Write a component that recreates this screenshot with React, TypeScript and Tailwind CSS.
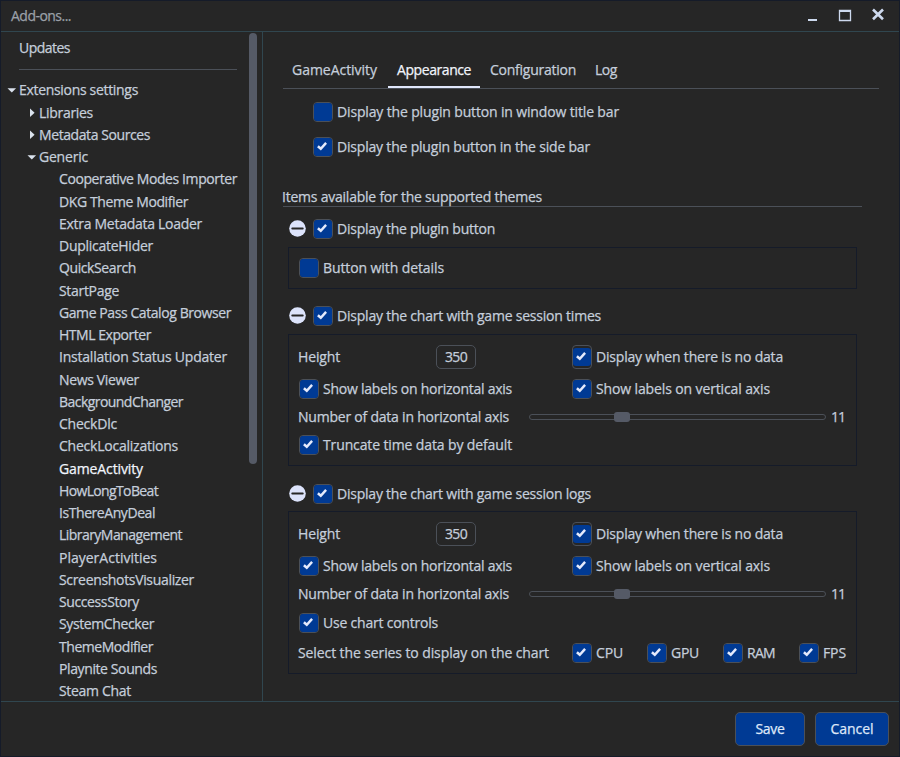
import { useLayoutEffect, useRef, useState, type ReactNode } from "react";

/** Text that spreads its letters so the line fills exactly `w` pixels. */
function Txt({ w, className = "", children }: { w: number; className?: string; children: string }) {
  const ref = useRef<HTMLSpanElement>(null);
  const [spacing, setSpacing] = useState(0);
  useLayoutEffect(() => {
    if (!ref.current) return;
    const natural = ref.current.getBoundingClientRect().width - spacing * children.length;
    setSpacing((w - natural) / children.length);
  }, [w, children]);
  return (
    <span ref={ref} className={`block w-max shrink-0 whitespace-pre leading-5 ${className}`} style={{ letterSpacing: `${spacing}px` }}>
      {children}
    </span>
  );
}

function Box({ on = true, tall = false }: { on?: boolean; tall?: boolean }) {
  return (
    <span className={`flex w-5 shrink-0 items-center justify-center rounded-[4px] border border-[#4b5058] ${tall ? "h-6" : "h-5"}`}>
      <span className="flex h-[18px] w-[18px] items-center justify-center rounded-[3px] bg-[#003a94]">
        {on && (
          <svg width="10" height="9" viewBox="0 0 10 9" className="mr-[2px] mb-px" fill="none" stroke="#e4eafc" strokeWidth="2.5">
            <path d="M0.9 4.2 L3.8 6.8 L9.1 0.9" />
          </svg>
        )}
      </span>
    </span>
  );
}

function Check({ w, on, tall, children }: { w: number; on?: boolean; tall?: boolean; children: string }) {
  return (
    <div className="flex items-center gap-1">
      <Box on={on} tall={tall} />
      <Txt w={w}>{children}</Txt>
    </div>
  );
}

function SectionHead({ w, children }: { w: number; children: string }) {
  return (
    <div className="flex h-5 items-center gap-[7px] pl-[6px]">
      <svg width="17" height="17" viewBox="0 0 17 17" className="mb-px">
        <circle cx="8.5" cy="8.5" r="8.3" fill="#dce3fb" />
        <path d="M3.3 8.5h10.4" stroke="#262626" strokeWidth="2" strokeLinecap="round" />
      </svg>
      <Check w={w}>{children}</Check>
    </div>
  );
}

function Panel({ className, children }: { className: string; children: ReactNode }) {
  return <div className={`ml-[5px] w-[569px] border border-[#151b29] pl-[10px] ${className}`}>{children}</div>;
}

function ChartOptions() {
  return (
    <>
      <div className="flex h-6 items-center">
        <div className="-ml-px w-[138px]">
          <Txt w={42}>Height</Txt>
        </div>
        <div className="flex h-6 w-10 items-center justify-center rounded-[5px] border border-[#4b5058]">
          <Txt w={22}>350</Txt>
        </div>
        <div className="ml-24">
          <Check w={187} tall>Display when there is no data</Check>
        </div>
      </div>
      <div className="mt-[10px] flex h-5">
        <div className="w-[273px]">
          <Check w={189}>Show labels on horizontal axis</Check>
        </div>
        <Check w={174}>Show labels on vertical axis</Check>
      </div>
      <div className="mt-[8px] flex h-5 items-center">
        <div className="-ml-px w-[231px]">
          <Txt w={211}>Number of data in horizontal axis</Txt>
        </div>
        <div className="flex h-[6px] w-[297px] items-center rounded-full border border-[#4b5058] pl-[84px]">
          <div className="h-[10px] w-4 shrink-0 rounded-[3px] bg-[#555a66]" />
        </div>
        <Txt w={14} className="ml-[5px]">11</Txt>
      </div>
    </>
  );
}

const extensions: [string, number][] = [
  ["Cooperative Modes Importer", 178],
  ["DKG Theme Modifier", 129],
  ["Extra Metadata Loader", 143],
  ["DuplicateHider", 94],
  ["QuickSearch", 77],
  ["StartPage", 60],
  ["Game Pass Catalog Browser", 172],
  ["HTML Exporter", 92],
  ["Installation Status Updater", 168],
  ["News Viewer", 80],
  ["BackgroundChanger", 124],
  ["CheckDlc", 58],
  ["CheckLocalizations", 119],
  ["GameActivity", 84],
  ["HowLongToBeat", 99],
  ["IsThereAnyDeal", 96],
  ["LibraryManagement", 123],
  ["PlayerActivities", 98],
  ["ScreenshotsVisualizer", 135],
  ["SuccessStory", 80],
  ["SystemChecker", 95],
  ["ThemeModifier", 94],
  ["Playnite Sounds", 98],
  ["Steam Chat", 72],
];

function Branch({ open, w, children }: { open: boolean; w: number; children: string }) {
  return (
    <div className="flex h-[22.2px] items-center">
      <svg width="12" height="10" viewBox="0 0 12 10" fill="#dbe3ee">
        {open ? <path d="M0.5 3.2h8.6L4.8 7.4z" /> : <path d="M3 0.6v8.4l4.6-4.2z" />}
      </svg>
      <Txt w={w}>{children}</Txt>
    </div>
  );
}

const tabs: [string, number, boolean][] = [
  ["GameActivity", 85, false],
  ["Appearance", 74, true],
  ["Configuration", 86, false],
  ["Log", 22, false],
];

export default function App() {
  return (
    <div className="flex h-[757px] w-[900px] flex-col overflow-hidden border border-[#151b29] bg-[#262626] font-['Open_Sans',sans-serif] text-[14px] text-[#c5cedb] [-webkit-text-stroke:0.25px]">
      <header className="flex h-[31px] shrink-0 items-center justify-between border-b border-[#30464f] pl-[10px] text-[#9ba0a8]">
        <Txt w={60}>Add-ons...</Txt>
        <svg width="100" height="30" viewBox="799 1 100 30" fill="none" stroke="#cdd9ee">
          <path d="M808 20h9" strokeWidth="2" />
          <path d="M839.5 10.5h11v10h-11z" strokeWidth="1.3" />
          <path d="M839 11h12" strokeWidth="2" />
          <path d="M873 9.5l10 9.8M883 9.5l-10 9.8" strokeWidth="2.6" />
        </svg>
      </header>

      <div className="flex min-h-0 flex-1">
        <aside className="flex w-[262px] shrink-0 border-r border-[#30464f]">
          <nav className="w-[236px] shrink-0">
            <div className="ml-[18px] flex h-[38px] items-center border-b border-[#4b5058] pb-[5px]">
              <Txt w={51}>Updates</Txt>
            </div>
            <div className="pt-[9px] pl-[6px]">
              <Branch open w={119}>Extensions settings</Branch>
              <div className="pt-[0.5px] pl-5">
                <Branch open={false} w={54}>Libraries</Branch>
                <Branch open={false} w={111}>Metadata Sources</Branch>
                <Branch open w={49}>Generic</Branch>
                <ul className="pl-8">
                  {extensions.map(([name, w]) => (
                    <li key={name} className={`flex h-[22.25px] items-center ${name === "GameActivity" ? "text-[#f1f5fc]" : ""}`}>
                      <Txt w={w}>{name}</Txt>
                    </li>
                  ))}
                </ul>
              </div>
            </div>
          </nav>
          <div className="mt-px ml-3 h-[431px] w-2 rounded-full bg-[#555a66]" />
        </aside>

        <main className="flex-1 pl-5">
          <div className="flex h-[57px] w-[596px] items-end gap-[2px] border-b border-[#4b5058] pl-px">
            {tabs.map(([name, w, active]) => (
              <div
                key={name}
                className={`flex h-7 items-start border-b-2 ${active ? "border-[#e0e7fb] px-[9px] text-[#f1f5fc]" : "border-transparent pr-[9px] pl-2"}`}
              >
                <Txt w={w}>{name}</Txt>
              </div>
            ))}
          </div>
          <div className="mt-[13px] flex flex-col gap-[15px] pl-[30px]">
            <Check w={282} on={false}>Display the plugin button in window title bar</Check>
            <Check w={253}>Display the plugin button in the side bar</Check>
          </div>
          <div className="mt-[30px] mb-3 flex h-5 w-[579px] items-center border-b border-[#4b5058]">
            <Txt w={260} className="-ml-px">Items available for the supported themes</Txt>
          </div>

          <SectionHead w={158}>Display the plugin button</SectionHead>
          <Panel className="mt-2 h-[42px] pt-[10px]">
            <Check w={121} on={false}>Button with details</Check>
          </Panel>

          <div className="mt-[17px]">
            <SectionHead w={264}>Display the chart with game session times</SectionHead>
          </div>
          <Panel className="mt-2 h-[132px] pt-[10px]">
            <ChartOptions />
            <div className="mt-2">
              <Check w={189}>Truncate time data by default</Check>
            </div>
          </Panel>

          <div className="mt-[18px]">
            <SectionHead w={254}>Display the chart with game session logs</SectionHead>
          </div>
          <Panel className="mt-[7px] h-[163px] pt-[10px]">
            <ChartOptions />
            <div className="mt-[9px]">
              <Check w={115}>Use chart controls</Check>
            </div>
            <div className="mt-[10px] flex h-5">
              <div className="-ml-px w-[274px]">
                <Txt w={251}>Select the series to display on the chart</Txt>
              </div>
              <div className="w-[75px]">
                <Check w={27}>CPU</Check>
              </div>
              <div className="w-[76px]">
                <Check w={28}>GPU</Check>
              </div>
              <div className="w-[76px]">
                <Check w={28}>RAM</Check>
              </div>
              <Check w={23}>FPS</Check>
            </div>
          </Panel>
        </main>
      </div>

      <footer className="flex h-[55px] shrink-0 items-start justify-end gap-[10px] border-t border-[#30464f] pt-[10px] pr-[10px] text-[#dfe7f8]">
        <button className="flex h-[34px] w-[70px] items-center justify-center rounded-[5px] border border-[#4b5058] bg-[#003a94]">
          <Txt w={29}>Save</Txt>
        </button>
        <button className="flex h-[34px] w-[74px] items-center justify-center rounded-[5px] border border-[#4b5058] bg-[#003a94]">
          <Txt w={43}>Cancel</Txt>
        </button>
      </footer>
    </div>
  );
}
